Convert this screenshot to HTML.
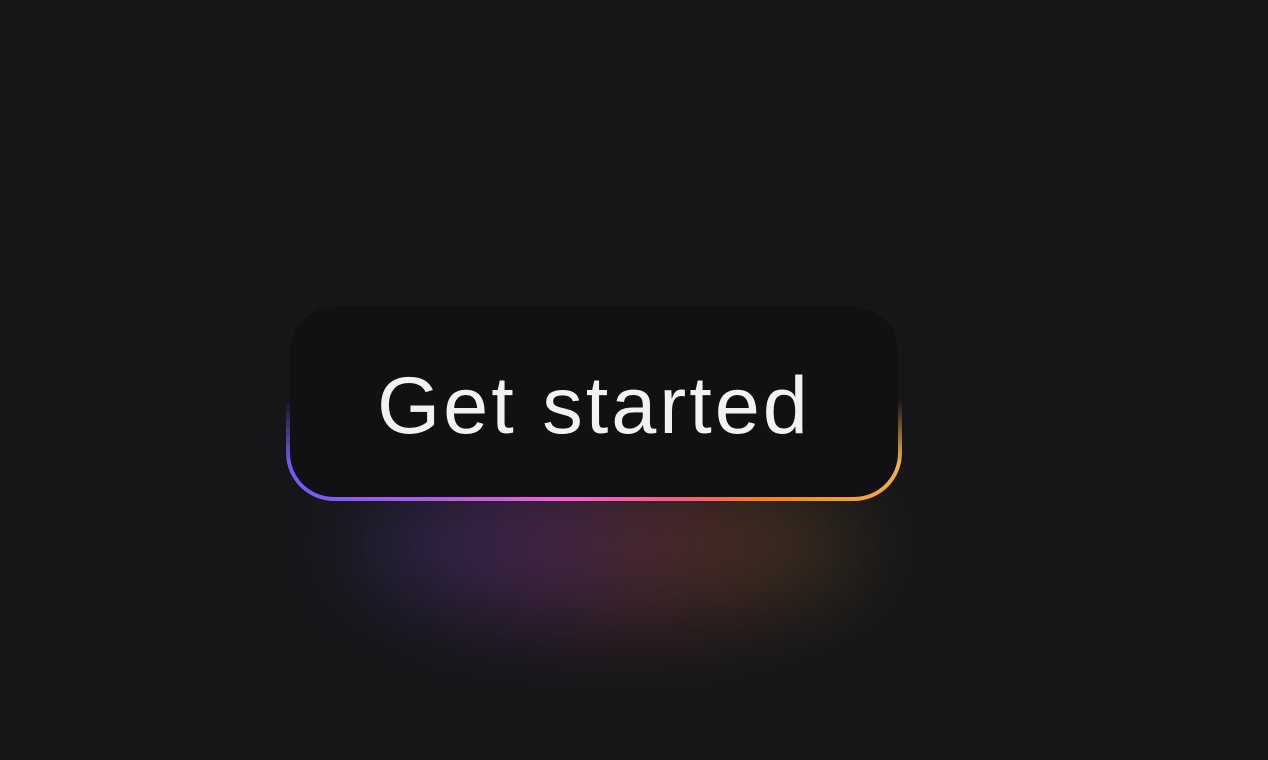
<!DOCTYPE html><html><head><style>
html,body{margin:0;width:1268px;height:760px;background:#161618;overflow:hidden}
.glow{position:absolute;left:350px;top:470px;width:520px;height:150px;border-radius:50%;
background:linear-gradient(90deg,#3a3a9a,#8a3a9a 35%,#a04a40 65%,#6a5a20);filter:blur(45px);opacity:.38}
.ring{position:absolute;left:286px;top:307px;width:616px;height:194px;border-radius:48px;
background:linear-gradient(90deg,#6a5cf2 0%,#a85ce8 20%,#f35ddc 45%,#f0607a 65%,#f57a25 75%,#f2b04a 100%);
-webkit-mask-image:linear-gradient(to bottom,transparent 48%,#000 80%);mask-image:linear-gradient(to bottom,transparent 48%,#000 80%)}
.btn{position:absolute;left:290px;top:307px;width:608px;height:190px;border-radius:44px;background:#111113;
display:flex;align-items:center;justify-content:center;color:#f2f2f2;
font-family:"Liberation Sans",sans-serif;font-size:81px;letter-spacing:3px;padding-top:8px;box-sizing:border-box}
</style></head><body>
<div class="glow"></div><div class="ring"></div><div class="btn">Get started</div>
</body></html>
